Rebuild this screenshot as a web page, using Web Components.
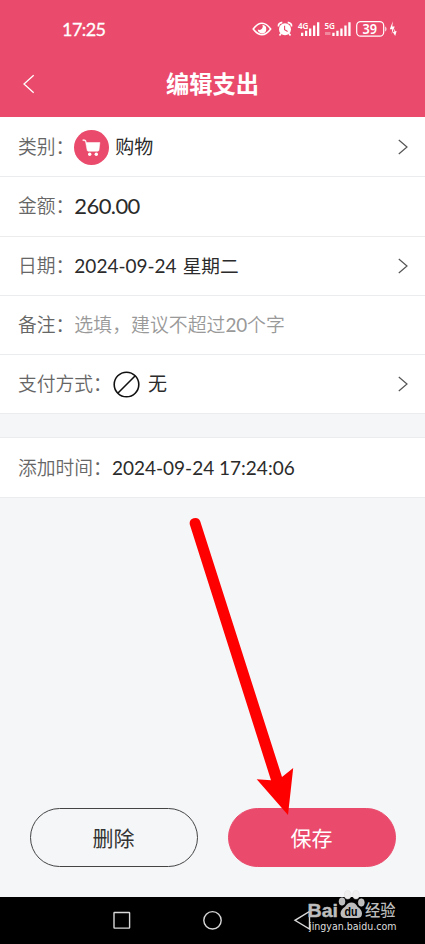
<!DOCTYPE html>
<html lang="zh-CN">
<head>
<meta charset="utf-8">
<title>编辑支出</title>
<style>
html,body{margin:0;height:100%}
body{width:425px;height:944px;overflow:hidden;font-family:Lato,"Noto Sans CJK SC",sans-serif}
</style>
</head>
<body>
<expense-screen></expense-screen>
<script>
const define = (name, markup) => customElements.define(name, class extends HTMLElement {
  constructor() {
    super();
    this.attachShadow({mode: 'open'}).innerHTML = markup;
  }
});

define('status-bar', `
<style>
:host{display:flex;height:57px;align-items:center;padding:0 27px 0 62px;color:#fff;font-size:18px;justify-content:space-between;box-sizing:border-box}
span{letter-spacing:-.55px;-webkit-text-stroke:.3px #fff}
svg{display:block}
text{font-family:"Noto Sans",sans-serif;font-weight:600;fill:#fff}
</style>
<span>17:25</span>
<svg width="146" height="24" viewBox="252 17 146 24" fill="#fff">
  <path d="M253.2 29Q257.500 23.200 262 23.200T270.700 29Q266.500 34.700 262 34.700T253.200 29Z" fill="none" stroke="#fff" stroke-width="1.500"/>
  <path d="M262.300 24.800a4.300 4.300 0 1 1-4.600 4.800q3 1 4.400-1t.2-3.800Z"/>
  <circle cx="285" cy="29.300" r="6"/>
  <path d="M278.500 26.500q-.5-3.500 3.800-4.200M291.500 26.500q.5-3.500-3.800-4.200M281 33.500l-1.500 2M289 33.500l1.500 2" fill="none" stroke="#fff" stroke-width="1.700"/>
  <path d="M284.600 25.800v4l3 1.700" fill="none" stroke="#ea4a6b" stroke-width="1.100"/>
  <text x="298" y="28.500" font-size="8.500" textLength="10.500" lengthAdjust="spacingAndGlyphs">4G</text>
  <path d="M301 32.800h2.300V36H301zM305 30.800h2.300V36H305zM309 28.500h2.300V36H309zM313 25.500h2.300V36H313zM317 22.200h2.300V36H317z"/>
  <text x="324.500" y="28.500" font-size="8.500" textLength="10.500" lengthAdjust="spacingAndGlyphs">5G</text>
  <path d="M325 32h5.500v3H325z" opacity=".35"/>
  <path d="M332.300 32.800h2.300V36h-2.300zM336.300 30.800h2.300V36h-2.300zM340.300 28.500h2.300V36h-2.300zM344.300 25.500h2.300V36h-2.300zM348.300 22.200h2.300V36h-2.300z"/>
  <rect x="356.700" y="21.600" width="27" height="14.600" rx="4" fill="none" stroke="#fff" stroke-width="1.200"/>
  <path d="M385.300 26.800h.6q1.200 2.200 0 4.500h-.6z"/>
  <text x="362.500" y="33.700" font-size="13.500" textLength="14.500" lengthAdjust="spacingAndGlyphs">39</text>
  <path d="M392.800 21.300l-3 8h2.400l-.5 4.700 3-7.600h-2.400zM394.300 28.400v3.400l-1.500.2 2.400 3.900 1.400-4.900-1.300.2z"/>
</svg>`);

define('title-bar', `
<style>
:host{display:grid;grid-template-columns:60px 1fr 60px;height:60px;align-items:center;color:#fff;padding-bottom:6px;box-sizing:border-box}
svg{display:block;margin-left:22px}
h1{margin:0;text-align:center;font-size:23.300px;line-height:34px;font-weight:700}
</style>
<svg width="14" height="20" viewBox="0 0 14 20"><path d="M11.700 1.200L2 10l9.700 8.800" fill="none" stroke="#fff" stroke-width="1.300"/></svg>
<h1><slot></slot></h1>`);

define('chevron-icon', `
<style>:host{display:block;margin-left:auto}svg{display:block}</style>
<svg width="12" height="16" viewBox="0 0 12 16"><path d="M.8 1L9 8l-8.200 7" fill="none" stroke="#555" stroke-width="1.200"/></svg>`);

define('form-row', `
<style>
:host{display:flex;align-items:center;height:59.300px;box-sizing:border-box;border-bottom:1px solid #ebeced;background:#fff;padding:0 15px 0 18px;font-size:19px;line-height:28px;color:#2b2b2b;white-space:nowrap}
.label{color:#666;font-size:18.800px;font-weight:350}
.value{display:flex;align-items:center}
</style>
<span class="label"><slot name="label"></slot></span><span class="value"><slot></slot></span><slot name="action"></slot>`);

define('cart-badge', `
<style>:host{display:block;width:35px;height:35px;margin-right:6px}svg{display:block}</style>
<svg width="35" height="35" viewBox="0 0 35 35"><circle cx="17.500" cy="17.500" r="17.500" fill="#ea4a6b"/>
<path d="M8.800 9.700q2-.2 2.700.4.500.4.900 2.400h13.500L25 20q-.3 1.300-1.500 1.300H14.500q-1.200 0-1.400-1.200L11.500 11.500q-.2-.8-2.700-1z" fill="#fff" stroke="#fff" stroke-width=".5" stroke-linejoin="round"/><circle cx="15.700" cy="24.300" r="1.700" fill="#fff"/><circle cx="22.300" cy="24.300" r="1.700" fill="#fff"/></svg>`);

define('none-icon', `
<style>:host{display:block;margin:0 8px 0 1px}svg{display:block}</style>
<svg width="27" height="27" viewBox="0 0 27 27" fill="none" stroke="#111" stroke-width="1.600"><circle cx="13.500" cy="13.500" r="12.300"/><path d="M5 22L22 5"/></svg>`);

define('pill-button', `
<style>
:host{display:flex;width:168px;height:59px;border-radius:30px;box-sizing:border-box;border:1.200px solid #444;align-items:center;justify-content:center;font-size:21px;line-height:30px;color:#333}
:host([primary]){background:#ea4a6b;color:#fff;border-color:#ea4a6b}
</style><slot></slot>`);

define('nav-bar', `
<style>
:host{display:block;height:47px;background:#000}
svg{display:block;overflow:visible}
</style>
<svg width="425" height="47" viewBox="0 897 425 47" fill="none" stroke="#d8d8d8" stroke-width="1.400">
<rect x="114" y="912.500" width="15.600" height="15.600" rx=".5"/><circle cx="212.500" cy="920.300" r="8.700"/><path d="M309.500 911.500v17.500L295 920.300z"/></svg>`);

define('site-watermark', `
<style>
:host{position:absolute;left:300px;top:885px;width:105px;height:55px}
svg{display:block}
text{font-family:"Liberation Sans","Noto Sans CJK SC",sans-serif}
</style>
<svg width="105" height="55" viewBox="300 885 105 55" fill="#bdbdbd">
<text x="307.500" y="916.500" font-size="18.500" font-weight="700" textLength="30.500" lengthAdjust="spacingAndGlyphs" stroke="#bdbdbd" stroke-width=".4">Bai</text>
<g stroke="#dcdcdc" stroke-width=".5"><ellipse cx="342" cy="901.500" rx="3" ry="3.800"/><ellipse cx="347.700" cy="894.800" rx="3.300" ry="4.200" fill="#efefef"/><ellipse cx="356" cy="894.800" rx="3.300" ry="4.200" fill="#efefef"/><ellipse cx="361.300" cy="902.500" rx="3" ry="3.800"/></g>
<path d="M351.500 902.500q4 0 6 4.300 4.500 3 4.500 6.700 0 4.500-5 4.500H346q-5.500 0-5.500-4.500 0-3.500 4.500-6.700 2.500-4.300 6.500-4.300z"/>
<text x="344.500" y="915.500" font-size="12" font-weight="700" fill="#000" textLength="13" lengthAdjust="spacingAndGlyphs">du</text>
<text x="365" y="916" font-size="15.500" font-weight="500" textLength="30.500" lengthAdjust="spacingAndGlyphs">经验</text>
<text x="309" y="930" font-size="9.800" style="font-family:'DejaVu Sans'" fill="#dedede" textLength="87.500" lengthAdjust="spacingAndGlyphs">jingyan.baidu.com</text>
</svg>`);

define('pointer-arrow', `
<style>:host{position:absolute;left:180px;top:510px;width:125px;height:310px}svg{display:block}</style>
<svg width="125" height="310" viewBox="180 510 125 310" fill="#f00"><path d="M189.800 524.500A5.500 5.500 0 0 1 200.200 521.200L282 777 293.200 768 288 815 256.700 779.200 271 780.200z"/></svg>`);

define('expense-screen', `
<style>
:host{display:flex;flex-direction:column;position:relative;width:425px;height:944px;background:#f5f6f8;overflow:hidden}
header{height:117px;background:#ea4a6b;flex:none}
.form{flex:none;border-top:1px solid #fff}
.gap{height:23px;border-bottom:1px solid #ebeced}
.muted{color:#999;font-size:18.900px;font-weight:350}
.muted b{font-weight:400;letter-spacing:-.2px}
.amount{font-size:22px;letter-spacing:-.6px}
.day{font-size:18.700px;margin-left:6px}
.actions{display:flex;justify-content:space-between;padding:0 29.500px 30px;margin-top:auto}
nav-bar{flex:none}
</style>
<header><status-bar></status-bar><title-bar>编辑支出</title-bar></header>
<div class="form">
<form-row><span slot="label">类别：</span><cart-badge></cart-badge><span>购物</span><chevron-icon slot="action"></chevron-icon></form-row>
<form-row><span slot="label">金额：</span><span class="amount">260.00</span></form-row>
<form-row><span slot="label">日期：</span><span>2024-09-24</span><span class="day">星期二</span><chevron-icon slot="action"></chevron-icon></form-row>
<form-row><span slot="label">备注：</span><span class="muted">选填，建议不超过<b>20</b>个字</span></form-row>
<form-row><span slot="label">支付方式：</span><none-icon></none-icon><span>无</span><chevron-icon slot="action"></chevron-icon></form-row>
<div class="gap"></div>
<form-row><span slot="label">添加时间：</span><span>2024-09-24 17:24:06</span></form-row>
</div>
<div class="actions"><pill-button>删除</pill-button><pill-button primary>保存</pill-button></div>
<nav-bar></nav-bar>
<pointer-arrow></pointer-arrow>
<site-watermark></site-watermark>`);
</script>
</body>
</html>
